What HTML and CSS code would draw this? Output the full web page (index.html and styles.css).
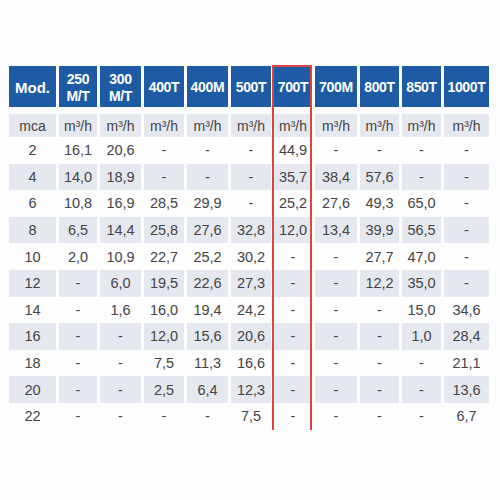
FILE: index.html
```html
<!DOCTYPE html>
<html lang="en">
<head>
    <meta charset="UTF-8">
    <meta name="viewport" content="width=device-width, initial-scale=1.0">
    <title>Tabla de caudales</title>
    <link rel="stylesheet" href="styles.css">
</head>
<body>
    <div class="chart">
        <div class="row head">
            <div class="mod">Mod.</div>
            <div>250<br>M/T</div>
            <div>300<br>M/T</div>
            <div>400T</div>
            <div>400M</div>
            <div>500T</div>
            <div>700T</div>
            <div>700M</div>
            <div>800T</div>
            <div>850T</div>
            <div>1000T</div>
        </div>
        <div class="row units shade">
            <div>mca</div>
            <div>m³/h</div><div>m³/h</div><div>m³/h</div><div>m³/h</div><div>m³/h</div>
            <div>m³/h</div><div>m³/h</div><div>m³/h</div><div>m³/h</div><div>m³/h</div>
        </div>
        <div class="row data">
            <div>2</div><div>16,1</div><div>20,6</div><div>-</div><div>-</div><div>-</div>
            <div>44,9</div><div>-</div><div>-</div><div>-</div><div>-</div>
        </div>
        <div class="row data shade">
            <div>4</div><div>14,0</div><div>18,9</div><div>-</div><div>-</div><div>-</div>
            <div>35,7</div><div>38,4</div><div>57,6</div><div>-</div><div>-</div>
        </div>
        <div class="row data">
            <div>6</div><div>10,8</div><div>16,9</div><div>28,5</div><div>29,9</div><div>-</div>
            <div>25,2</div><div>27,6</div><div>49,3</div><div>65,0</div><div>-</div>
        </div>
        <div class="row data shade">
            <div>8</div><div>6,5</div><div>14,4</div><div>25,8</div><div>27,6</div><div>32,8</div>
            <div>12,0</div><div>13,4</div><div>39,9</div><div>56,5</div><div>-</div>
        </div>
        <div class="row data">
            <div>10</div><div>2,0</div><div>10,9</div><div>22,7</div><div>25,2</div><div>30,2</div>
            <div>-</div><div>-</div><div>27,7</div><div>47,0</div><div>-</div>
        </div>
        <div class="row data shade">
            <div>12</div><div>-</div><div>6,0</div><div>19,5</div><div>22,6</div><div>27,3</div>
            <div>-</div><div>-</div><div>12,2</div><div>35,0</div><div>-</div>
        </div>
        <div class="row data">
            <div>14</div><div>-</div><div>1,6</div><div>16,0</div><div>19,4</div><div>24,2</div>
            <div>-</div><div>-</div><div>-</div><div>15,0</div><div>34,6</div>
        </div>
        <div class="row data shade">
            <div>16</div><div>-</div><div>-</div><div>12,0</div><div>15,6</div><div>20,6</div>
            <div>-</div><div>-</div><div>-</div><div>1,0</div><div>28,4</div>
        </div>
        <div class="row data">
            <div>18</div><div>-</div><div>-</div><div>7,5</div><div>11,3</div><div>16,6</div>
            <div>-</div><div>-</div><div>-</div><div>-</div><div>21,1</div>
        </div>
        <div class="row data shade">
            <div>20</div><div>-</div><div>-</div><div>2,5</div><div>6,4</div><div>12,3</div>
            <div>-</div><div>-</div><div>-</div><div>-</div><div>13,6</div>
        </div>
        <div class="row data">
            <div>22</div><div>-</div><div>-</div><div>-</div><div>-</div><div>7,5</div>
            <div>-</div><div>-</div><div>-</div><div>-</div><div>6,7</div>
        </div>

        <!-- highlight around the 700T column -->
        <div class="highlight"></div>
    </div>
</body>
</html>
```

FILE: styles.css
```css
:root {
    --blue: #1d5ca4;
    --shade: #e6e8ef;
    --text: #444446;
    --red: #d8463d;
}

body {
    margin: 0;
    background-color: #fdfdfd;
    font-family: 'Liberation Sans', Arial, sans-serif;
    color: var(--text);
}

.chart {
    position: relative;
    margin: 66px 0 0 9px;
    width: 480px;
}

.row {
    display: grid;
    grid-template-columns: 47px 38px 41px 40px 41px 40px 38px 42px 39px 39px 45px;
    column-gap: 3px;
}

.row > div {
    display: flex;
    align-items: center;
    justify-content: center;
    text-align: center;
    white-space: nowrap;
}

.head {
    height: 41px;
    margin-bottom: 7px;
}

.head > div {
    background-color: var(--blue);
    color: #fff;
    font-weight: bold;
    font-size: 14px;
    line-height: 17px;
    letter-spacing: -0.3px;
    padding-top: 2px;
}

.head .mod {
    font-size: 15px;
    letter-spacing: 0;
}

.units {
    height: 23px;
    font-size: 14px;
}

.data {
    height: 26.6px;
    font-size: 14.5px;
}

.shade > div {
    background-color: var(--shade);
}

.highlight {
    position: absolute;
    left: 263px;
    top: -1px;
    width: 36px;
    height: 365px;
    border: 2px solid var(--red);
}
```
